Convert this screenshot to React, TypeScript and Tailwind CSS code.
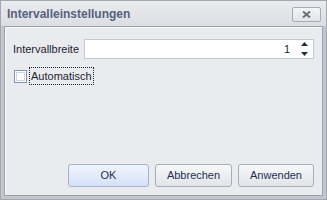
import React from 'react';

const ui = { fontFamily: '"Liberation Sans", Arial, sans-serif' };

function Spinner() {
  return (
    <div className="flex flex-col items-center justify-center gap-[4px] w-[11px]">
      <svg width="7" height="5" viewBox="0 0 7 5">
        <path d="M3.5 0 L7 4 L0 4 Z" fill="#2b2f38" />
      </svg>
      <svg width="7" height="5" viewBox="0 0 7 5">
        <path d="M0 1 L7 1 L3.5 5 Z" fill="#2b2f38" />
      </svg>
    </div>
  );
}

function DlgButton({ label, primary, width }: { label: string; primary?: boolean; width: string }) {
  return (
    <button
      className={
        primary
          ? `${width} h-[23px] rounded-[3px] border border-[#a3b3d3] bg-gradient-to-b from-[#f1f5fe] to-[#d5e1f8] text-[11px] text-[#1f2f55]`
          : `${width} h-[23px] rounded-[3px] border border-[#a9adb5] bg-gradient-to-b from-[#f7f8fa] to-[#e2e4e9] text-[11px] text-[#1f2f55]`
      }
      style={ui}
    >
      {label}
    </button>
  );
}

export default function App() {
  return (
    <div
      className="w-[327px] h-[200px] flex flex-col border border-[#a4a8b0] bg-[#c3c6cc]"
      style={ui}
    >
      {/* title bar */}
      <div className="h-[25px] flex items-center justify-between pl-[6px] pr-[5px] bg-gradient-to-b from-[#e9ebee] to-[#dcdee3]">
        <span className="text-[12px] font-bold text-[#56627e] leading-[14px]">Intervalleinstellungen</span>
        <div className="w-[29px] h-[15px] mt-[1px] flex items-center justify-center rounded-[2px] border border-[#a7abb2] bg-gradient-to-b from-[#f3f4f6] to-[#e1e3e7]">
          <svg width="9" height="7" viewBox="0 0 9 7">
            <path d="M1 0.5 L8 6.5 M8 0.5 L1 6.5" stroke="#6d727b" strokeWidth="2" />
          </svg>
        </div>
      </div>

      {/* content panel */}
      <div className="flex-1 mx-[3px] mb-[3px] border border-[#9ea2a9] bg-[#e9ebef] flex flex-col">
        <div className="flex-1 flex flex-col border-t border-l border-white/70 pt-[11px] pl-[7px] pr-[8px] pb-[8px]">
          <div className="flex items-center h-[20px]">
            <span className="w-[71px] text-[11px] text-[#1d2433]">Intervallbreite</span>
            <div className="flex-1 h-[20px] flex items-center justify-end bg-white border border-[#c4c8cf] pr-[3px]">
              <span className="text-[11px] text-[#1d2433] mr-[9px]">1</span>
              <Spinner />
            </div>
          </div>

          <div className="flex items-center mt-[8px] h-[18px]">
            <div className="ml-[1px] w-[13px] h-[13px] border border-[#8391b8] bg-white p-[1px]">
              <div className="w-full h-full border border-[#cdd5e6]" />
            </div>
            <span className="ml-[2px] h-[18px] px-[1px] flex items-center border border-dotted border-[#222] text-[11px] text-[#1d2433]">
              Automatisch
            </span>
          </div>

          <div className="flex-1" />

          <div className="flex justify-end gap-[6px]">
            <DlgButton label="OK" primary width="w-[81px]" />
            <DlgButton label="Abbrechen" width="w-[77px]" />
            <DlgButton label="Anwenden" width="w-[76px]" />
          </div>
        </div>
      </div>
    </div>
  );
}
